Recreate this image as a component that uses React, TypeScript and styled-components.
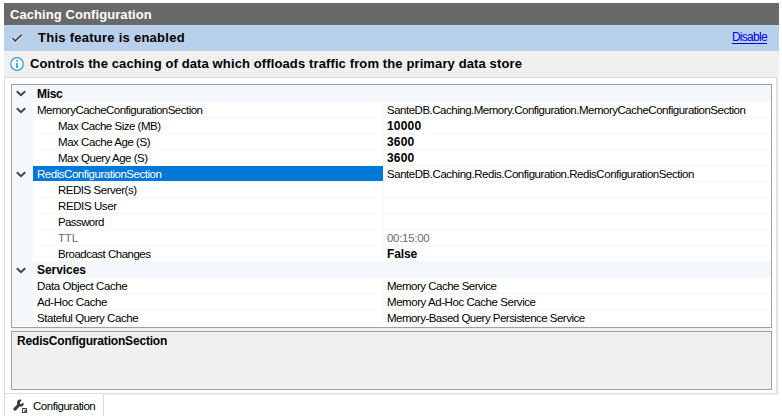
import React from 'react';
import styled, { createGlobalStyle } from 'styled-components';

const GlobalStyle = createGlobalStyle`
  * { box-sizing: border-box; }
  body { margin: 0; background: #fff; font: 11.5px "Liberation Sans", Arial, sans-serif; color: #000; }
`;

const Window = styled.div`
  display: flex;
  flex-direction: column;
  width: 782px;
  height: 419px;
  padding: 3px 3px 3px 4px;
  overflow: hidden;
`;

const Label = styled.span<{ $tracking?: number }>`
  letter-spacing: ${p => p.$tracking ?? 0}px;
  white-space: pre;
`;

const TitleBar = styled.header`
  flex: none;
  height: 22px;
  padding-left: 6px;
  background: #696969;
  color: #fff;
  font-size: 13px;
  font-weight: bold;
  line-height: 24px;
`;

const StatusBar = styled.div`
  display: flex;
  flex: none;
  align-items: center;
  height: 26px;
  padding: 0 12px 2px 7px;
  background: #b9d0ea;
`;

const StatusText = styled.div`
  flex: 1;
  margin-left: 15px;
  font-size: 13px;
  font-weight: bold;
`;

const DisableLink = styled.a`
  color: #0000f0;
  font-size: 12px;
  text-decoration: underline;
  text-underline-offset: 2px;
`;

const InfoBar = styled.div`
  display: flex;
  flex: none;
  align-items: center;
  gap: 6px;
  height: 26px;
  padding-left: 6px;
  background: #f0f0f0;
  font-size: 13px;
  font-weight: bold;
`;

const InfoText = styled.div`
  padding-bottom: 2px;
`;

const PageBackdrop = styled.div`
  flex: none;
  height: 317px;
  background: #f0f0f0;
`;

const PageArea = styled.main`
  width: 773px;
  height: 317px;
  padding: 6px;
  background: #fff;
  border: 1px solid #dcdcdc;
`;

const Grid = styled.div`
  width: 761px;
  background: #f0f0f0;
`;

const Rows = styled.div`
  height: 244px;
  margin-bottom: 3px;
  background: #fff;
  border: 1px solid #a0a0a0;
`;

const Row = styled.div<{ $height?: number }>`
  display: grid;
  grid-template-columns: 21px 351px 1fr;
  height: ${p => p.$height ?? 16}px;
  line-height: 16px;
`;

const Gutter = styled.div`
  display: flex;
  align-items: center;
  justify-content: center;
  padding-right: 3px;
  background: #f4f7fc;
`;

const CategoryName = styled.div`
  grid-column: 2 / 4;
  padding-left: 4px;
  background: #f4f7fc;
  font-size: 12px;
  font-weight: bold;
  align-content: end;
`;

const NameCell = styled.div<{ $nested?: boolean; $selected?: boolean; $muted?: boolean }>`
  height: 16px;
  padding-left: ${p => (p.$nested ? 25 : 4)}px;
  border-right: 1px solid #f4f7fc;
  border-bottom: 1px solid #f4f7fc;
  background: ${p => (p.$selected ? '#0078d7' : '#fff')};
  background-clip: padding-box;
  color: ${p => (p.$selected ? '#fff' : p.$muted ? '#6d6d6d' : '#000')};
`;

const ValueCell = styled.div<{ $modified?: boolean; $muted?: boolean }>`
  height: 16px;
  padding-left: 3px;
  border-bottom: 1px solid #f4f7fc;
  color: ${p => (p.$muted ? '#6d6d6d' : '#000')};
  font-size: ${p => (p.$modified ? 12 : 11.5)}px;
  font-weight: ${p => (p.$modified ? 'bold' : 'normal')};
`;

const Description = styled.div`
  height: 59px;
  padding: 2px 5px;
  background: #f0f0f0;
  border: 1px solid #a0a0a0;
  font-size: 12px;
  font-weight: bold;
  line-height: 15px;
`;

const TabStrip = styled.nav`
  flex: none;
  width: 775px;
  height: 22px;
  border-top: 1px solid #f0f0f0;
`;

const Tab = styled.div`
  display: flex;
  align-items: center;
  gap: 5px;
  width: 100px;
  height: 22px;
  margin-top: -1px;
  padding: 2px 0 0 8px;
  background: #fff;
  border-left: 1px solid #dcdcdc;
  border-right: 1px solid #dcdcdc;
`;

const Chevron = () => (
  <svg width="10" height="7" viewBox="0 0 10 7" fill="none" stroke="#424242" strokeWidth="1.9">
    <path d="M.8 1.3 5 5.2 9.2 1.3" />
  </svg>
);

const CheckMark = styled.svg`
  margin-top: 2px;
`;

const CheckIcon = () => (
  <CheckMark width="12" height="10" viewBox="0 0 12 10" fill="none">
    <path d="M.8 5.2 4.2 8.3 11.2 1.5" stroke="#fff" strokeWidth="3.4" opacity=".65" />
    <path d="M1.3 5.2 4.2 8 10.8 1.6" stroke="#4a4a4a" strokeWidth="1.8" />
  </CheckMark>
);

const InfoIcon = () => (
  <svg width="14" height="14" viewBox="0 0 14 14">
    <circle cx="7" cy="7" r="6.3" fill="#fff" stroke="#2f9bd0" strokeWidth="1.2" />
    <path d="M7 3v1.7M7 6v5" stroke="#1e91cc" strokeWidth="1.5" />
  </svg>
);

const WrenchIcon = () => (
  <svg width="15" height="15" viewBox="0 0 15 15">
    <path
      d="M10.4 3.4 8 5.2 6.6 4.2 8.6.9C6.1-.1 3.7 1.5 4 4.2L4.2 5.6.6 9.2C-.5 10.6 1.4 12.6 2.9 11.4L6.5 7.6C9.2 8.4 11.4 6 10.4 3.4Z"
      fill="#3c3c3c"
    />
    <rect x="9.5" y="9.5" width="4" height="4" fill="#fff" stroke="#424242" />
    <path d="M11 10.8l1.4 1.4M12.5 10.7v1.8H10.9" stroke="#424242" strokeWidth=".7" fill="none" />
  </svg>
);

interface Property {
  name: string;
  nameTracking: number;
  value?: string;
  valueTracking?: number;
  expandable?: boolean;
  nested?: boolean;
  selected?: boolean;
  muted?: boolean;
  modified?: boolean;
}

const misc: Property[] = [
  { name: 'MemoryCacheConfigurationSection', nameTracking: -0.52, value: 'SanteDB.Caching.Memory.Configuration.MemoryCacheConfigurationSection', valueTracking: -0.49, expandable: true },
  { name: 'Max Cache Size (MB)', nameTracking: -0.49, value: '10000', valueTracking: 0.2, nested: true, modified: true },
  { name: 'Max Cache Age (S)', nameTracking: -0.45, value: '3600', valueTracking: 0.2, nested: true, modified: true },
  { name: 'Max Query Age (S)', nameTracking: -0.48, value: '3600', valueTracking: 0.2, nested: true, modified: true },
  { name: 'RedisConfigurationSection', nameTracking: -0.47, value: 'SanteDB.Caching.Redis.Configuration.RedisConfigurationSection', valueTracking: -0.46, expandable: true, selected: true },
  { name: 'REDIS Server(s)', nameTracking: -0.47, nested: true },
  { name: 'REDIS User', nameTracking: -0.4, nested: true },
  { name: 'Password', nameTracking: -0.6, nested: true },
  { name: 'TTL', nameTracking: -0.2, value: '00:15:00', valueTracking: -0.3, nested: true, muted: true },
  { name: 'Broadcast Changes', nameTracking: -0.5, value: 'False', valueTracking: -0.1, nested: true, modified: true },
];

const services: Property[] = [
  { name: 'Data Object Cache', nameTracking: -0.4, value: 'Memory Cache Service', valueTracking: -0.5 },
  { name: 'Ad-Hoc Cache', nameTracking: -0.39, value: 'Memory Ad-Hoc Cache Service', valueTracking: -0.44 },
  { name: 'Stateful Query Cache', nameTracking: -0.44, value: 'Memory-Based Query Persistence Service', valueTracking: -0.52 },
];

const PropertyRow = ({ item }: { item: Property }) => (
  <Row>
    <Gutter>{item.expandable && <Chevron />}</Gutter>
    <NameCell $nested={item.nested} $selected={item.selected} $muted={item.muted}>
      <Label $tracking={item.nameTracking}>{item.name}</Label>
    </NameCell>
    <ValueCell $modified={item.modified} $muted={item.muted}>
      {item.value && <Label $tracking={item.valueTracking}>{item.value}</Label>}
    </ValueCell>
  </Row>
);

const CategoryRow = ({ name, tracking, height }: { name: string; tracking: number; height?: number }) => (
  <Row $height={height}>
    <Gutter><Chevron /></Gutter>
    <CategoryName><Label $tracking={tracking}>{name}</Label></CategoryName>
  </Row>
);

export default function App() {
  return (
    <>
      <GlobalStyle />
      <Window>
        <TitleBar><Label $tracking={0.08}>Caching Configuration</Label></TitleBar>
        <StatusBar>
          <CheckIcon />
          <StatusText><Label $tracking={0.26}>This feature is enabled</Label></StatusText>
          <DisableLink href="#"><Label $tracking={-0.7}>Disable</Label></DisableLink>
        </StatusBar>
        <InfoBar>
          <InfoIcon />
          <InfoText>
            <Label $tracking={0.12}>Controls the caching of data which offloads traffic from the primary data store</Label>
          </InfoText>
        </InfoBar>
        <PageBackdrop>
          <PageArea>
            <Grid>
              <Rows>
                <CategoryRow name="Misc" tracking={-0.3} height={17} />
                {misc.map(item => <PropertyRow key={item.name} item={item} />)}
                <CategoryRow name="Services" tracking={-0.05} />
                {services.map(item => <PropertyRow key={item.name} item={item} />)}
              </Rows>
              <Description><Label $tracking={-0.18}>RedisConfigurationSection</Label></Description>
            </Grid>
          </PageArea>
        </PageBackdrop>
        <TabStrip>
          <Tab>
            <WrenchIcon />
            <Label $tracking={-0.47}>Configuration</Label>
          </Tab>
        </TabStrip>
      </Window>
    </>
  );
}
